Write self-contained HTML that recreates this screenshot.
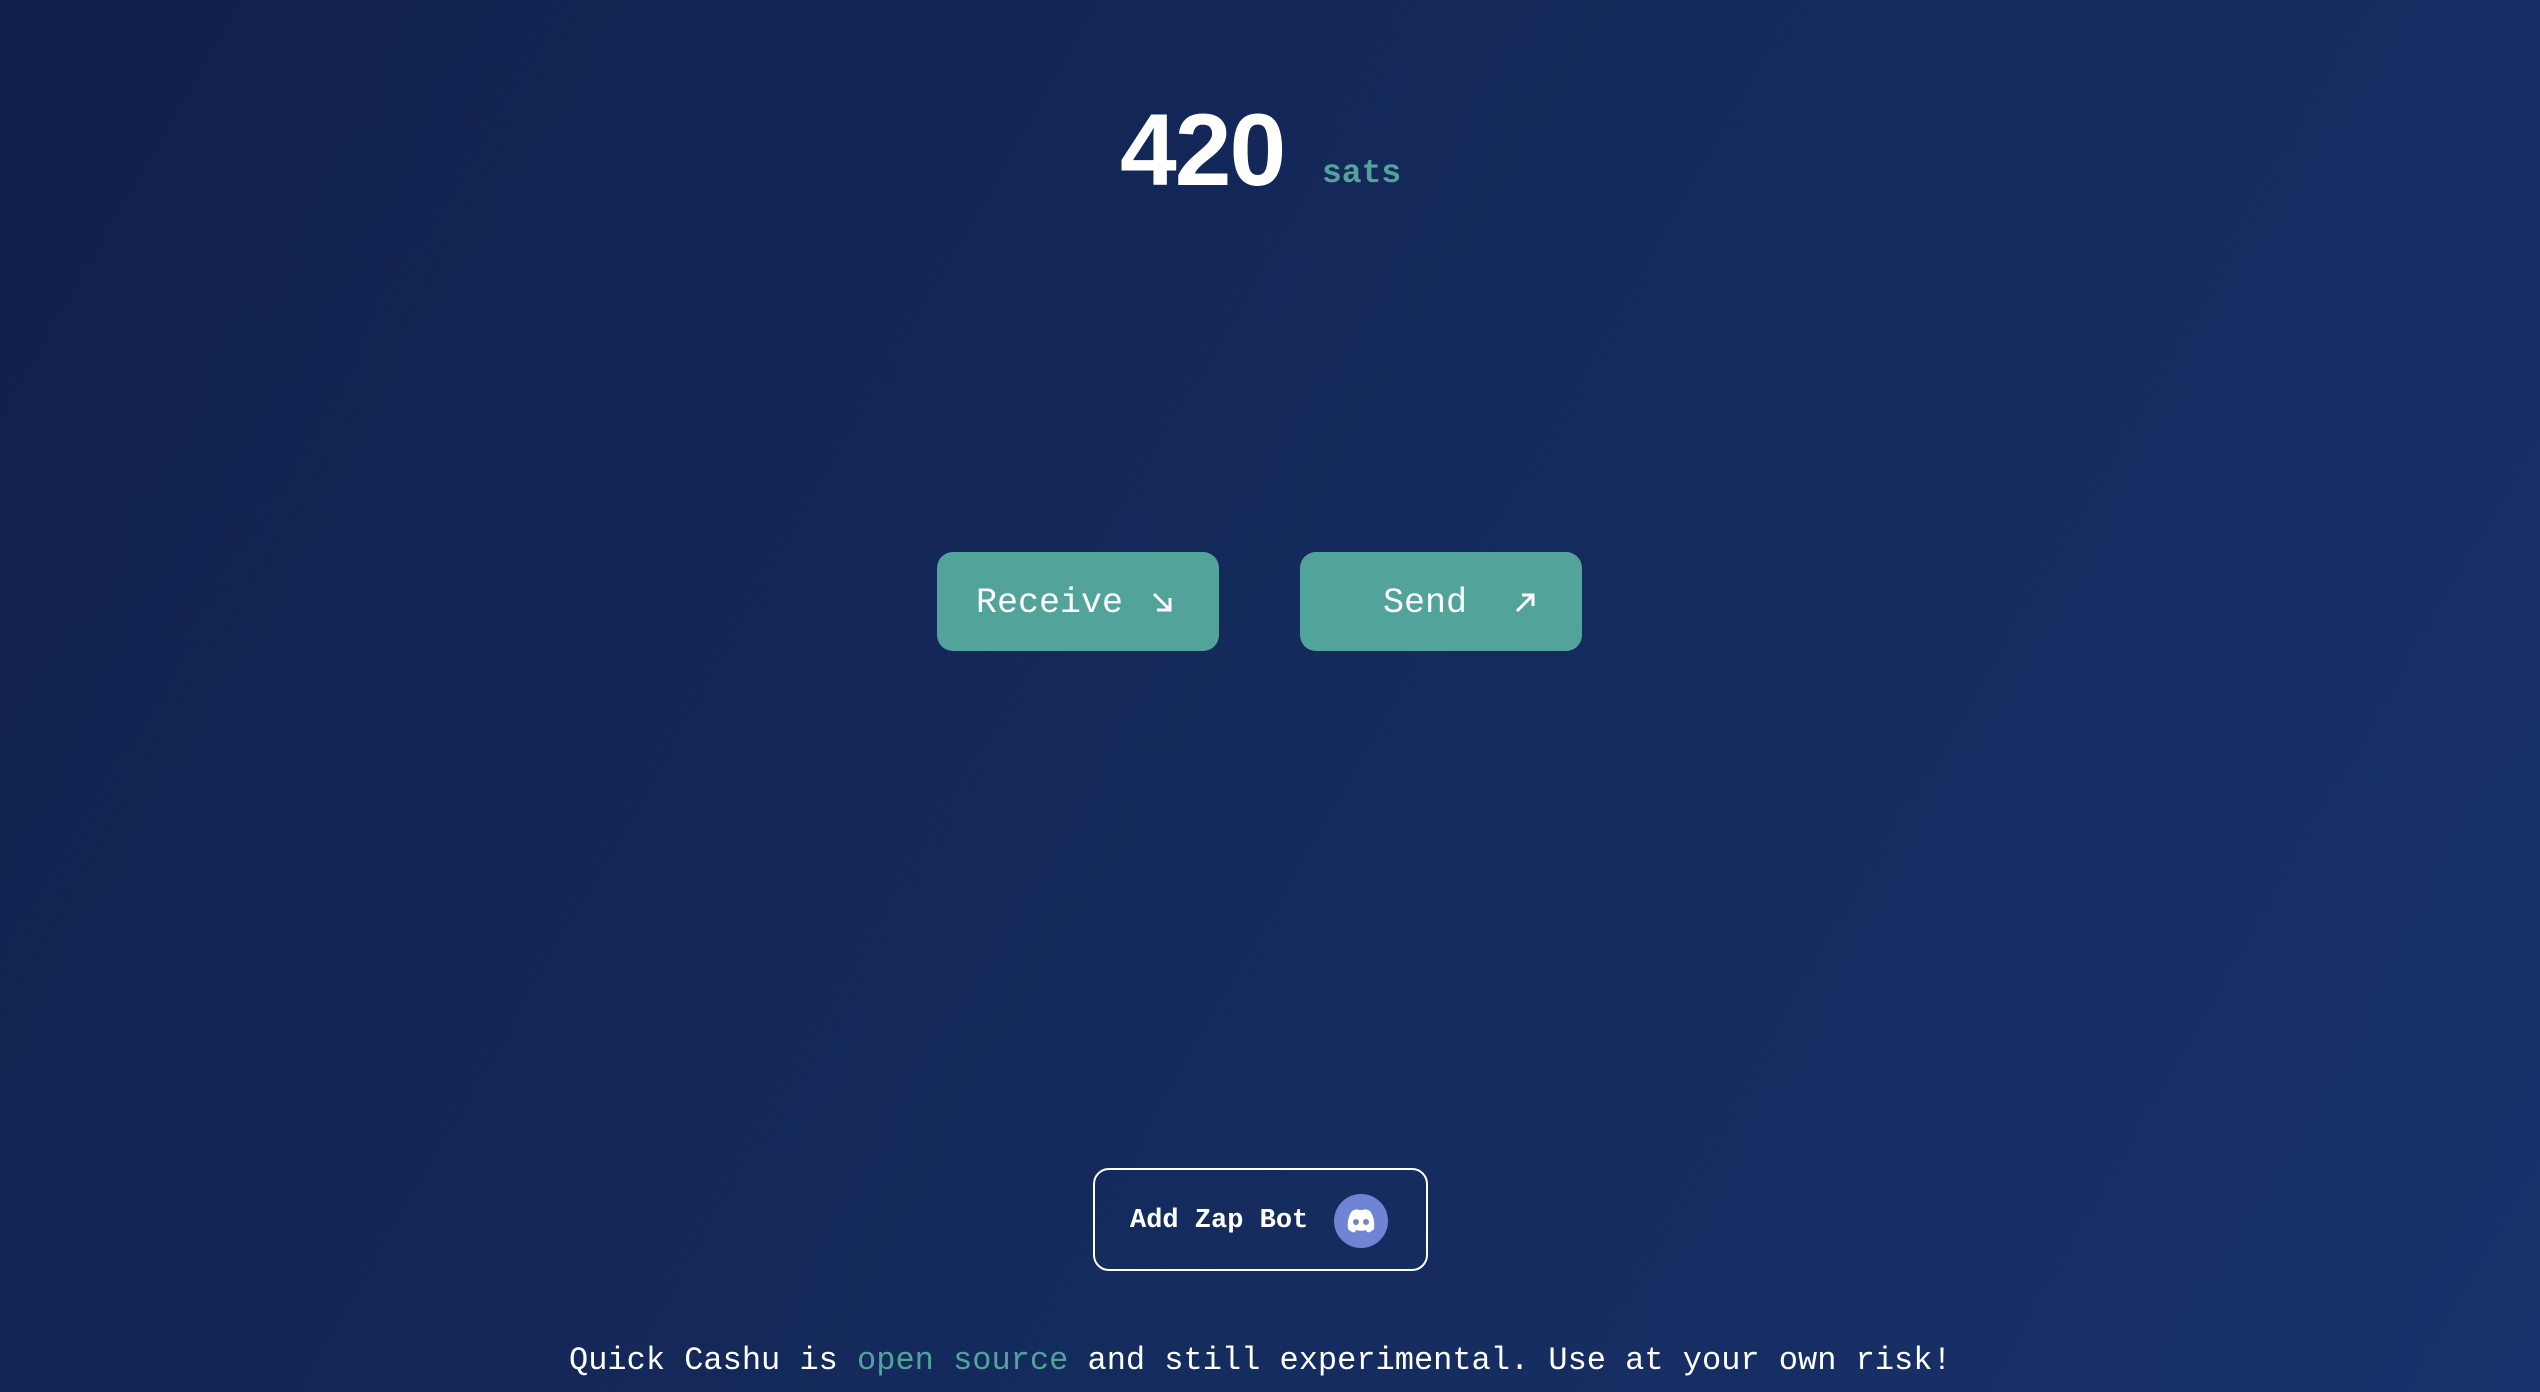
<!DOCTYPE html>
<html><head><meta charset="utf-8"><style>
html,body{margin:0;padding:0}
body{width:2540px;height:1392px;overflow:hidden;position:relative;background:linear-gradient(120deg,#10204a 0%,#142a5c 50%,#19326b 100%);font-family:"Liberation Mono",monospace;color:#fff}
.abs{position:absolute;white-space:nowrap}
.num{left:1120px;top:88px;font-family:"Liberation Sans",sans-serif;font-weight:bold;font-size:102px;line-height:124px;letter-spacing:-2px}
.sats{left:1322px;top:154px;font-size:33px;line-height:40px;font-weight:bold;color:#52a39a}
.btn{position:absolute;top:552px;width:282px;height:99px;background:#52a39a;border-radius:16px}
.btn span{position:absolute;top:30px;font-size:35px;line-height:42px}
.zap{position:absolute;left:1093px;top:1168px;width:331px;height:99px;border:2px solid #fff;border-radius:16px}
.foot{left:569px;top:1341px;font-size:32px;line-height:40px}
</style></head><body>
<div class="abs num">420</div>
<div class="abs sats">sats</div>
<div class="btn" style="left:937px"><span style="left:39px">Receive</span>
<svg style="position:absolute;left:214px;top:38px" width="22" height="24" viewBox="0 0 22 24"><path d="M3 4 L19 20 M19 8 V20 H6" stroke="#fff" stroke-width="3" fill="none"/></svg></div>
<div class="btn" style="left:1300px"><span style="left:83px">Send</span>
<svg style="position:absolute;left:214px;top:38px" width="22" height="24" viewBox="0 0 22 24"><path d="M3 21 L19 5 M8 5 H19 V16" stroke="#fff" stroke-width="3" fill="none"/></svg></div>
<div class="zap">
<div class="abs" style="left:35px;top:33px;font-size:27px;line-height:36px;font-weight:bold">Add Zap Bot</div>
<svg style="position:absolute;left:238px;top:23px" width="56" height="56" viewBox="0 0 56 56"><circle cx="28" cy="28" r="27" fill="#6f84d2"/><path d="M15 36 C14 28 16 22 19 18 C22 16 25 16 26 17 L30 17 C31 16 34 16 37 18 C40 22 42 28 41 36 C38 39 35 40 34 39 L33 37 C30 38 26 38 23 37 L22 39 C21 40 18 39 15 36 Z" fill="#fff"/><circle cx="23" cy="29" r="3" fill="#6f84d2"/><circle cx="33" cy="29" r="3" fill="#6f84d2"/></svg>
</div>
<div class="abs foot">Quick Cashu is <span style="color:#52a39a">open source</span> and still experimental. Use at your own risk!</div>
</body></html>
